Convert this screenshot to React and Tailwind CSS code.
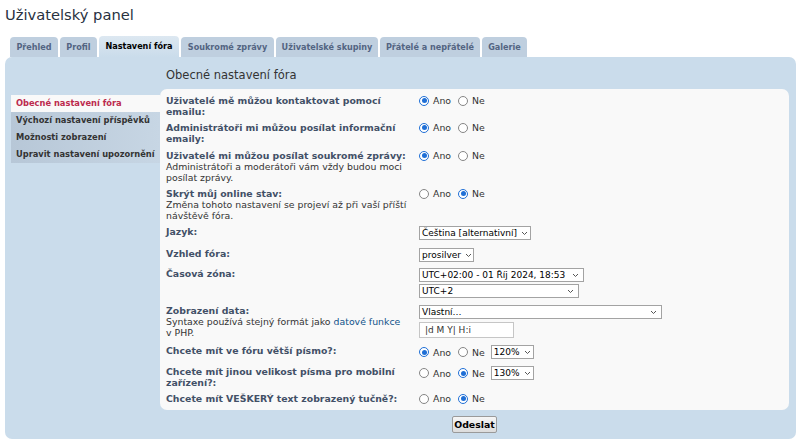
import React from 'react'

const tabs = [
  { label: 'Přehled', w: 'w-[48px]' },
  { label: 'Profil', w: 'w-[37px]' },
  { label: 'Nastavení fóra', w: 'w-[80px]', active: true },
  { label: 'Soukromé zprávy', w: 'w-[93px]' },
  { label: 'Uživatelské skupiny', w: 'w-[102px]' },
  { label: 'Přátelé a nepřátelé', w: 'w-[100px]' },
  { label: 'Galerie', w: 'w-[45px]' },
]

const menu = [
  { label: 'Obecné nastavení fóra', active: true },
  { label: 'Výchozí nastavení příspěvků' },
  { label: 'Možnosti zobrazení' },
  { label: 'Upravit nastavení upozornění' },
]

const Radio = ({ checked }) => (
  <span
    className={`w-[10px] h-[10px] rounded-full border flex items-center justify-center bg-white shrink-0 ${
      checked ? 'border-[#1f6fd6]' : 'border-[#858585]'
    }`}
  >
    {checked && <span className="w-[5px] h-[5px] rounded-full bg-[#1f6fd6]" />}
  </span>
)

const YesNo = ({ yes }) => (
  <div className="flex items-center h-[11px] text-[#333]">
    <Radio checked={yes} />
    <span className="ml-[4px]">Ano</span>
    <span className="ml-[7px]"><Radio checked={!yes} /></span>
    <span className="ml-[4px]">Ne</span>
  </div>
)

const Chevron = () => (
  <svg width="7" height="5" viewBox="0 0 7 5" className="shrink-0 ml-[4px]">
    <path d="M1 1l2.5 2.5L6 1" fill="none" stroke="#555" strokeWidth="1" />
  </svg>
)

// fake native select, fixed width per field
const Select = ({ children, w }) => (
  <div className={`flex items-center justify-between h-[14px] border border-[#a3a3a3] bg-white pl-[2px] pr-[4px] text-black text-[9px] ${w}`}>
    <span className="whitespace-nowrap">{children}</span>
    <Chevron />
  </div>
)

const Row = ({ label, desc, mt, children }) => (
  <div className={`flex items-start ${mt}`}>
    <div className="w-[253px] shrink-0 pr-[4px]">
      <div className="font-bold text-[#425067]">{label}</div>
      {desc && <div className="text-[#333]">{desc}</div>}
    </div>
    <div className="flex-1">{children}</div>
  </div>
)

export default function App() {
  return (
    <div className="w-[800px] h-[441px] bg-white font-['DejaVu_Sans',Verdana,sans-serif] overflow-hidden">
      <h2 className="h-[36px] pl-[5px] pt-[6px] text-[14.7px] leading-[18px] text-[#28313f]">Uživatelský panel</h2>

      <div className="flex items-end gap-[2px] pl-[10px] h-[21px]">
        {tabs.map(t => (
          <div
            key={t.label}
            className={`${t.w} rounded-t-[4px] text-center font-bold text-[8.1px] whitespace-nowrap ${
              t.active
                ? 'h-[21px] leading-[21px] bg-gradient-to-b from-[#dde8f1] to-[#cadceb] text-black'
                : 'h-[20px] leading-[20px] bg-[#bfcfdf] text-[#536482]'
            }`}
          >
            {t.label}
          </div>
        ))}
      </div>

      <div className="ml-[5px] w-[791px] h-[382px] rounded-[7px] bg-[#cadceb] flex pl-[6px] pr-[7px]">
        <div className="w-[149px] mt-[38px] flex flex-col self-start">
          {menu.map(m => (
            <div
              key={m.label}
              className={`h-[17px] leading-[17px] pl-[5px] font-bold text-[8.3px] whitespace-nowrap ${
                m.active
                  ? 'bg-[#f9f9f9] text-[#bc2a4d]'
                  : 'bg-gradient-to-r from-[#b7c7d7] to-[#c7d6e4] text-[#333]'
              }`}
            >
              {m.label}
            </div>
          ))}
        </div>

        <div className="w-[629px] flex flex-col">
          <div className="h-[32px] pt-[12px] pl-[6px] text-[11.5px] leading-[13px] text-[#333]">Obecné nastavení fóra</div>

          <div className="h-[321px] rounded-[7px] bg-[#f9f9f9] pl-[6px] pt-[6px] text-[9.35px] leading-[11px]">
            <Row label={<>Uživatelé mě můžou kontaktovat pomocí<br />emailu:</>}>
              <YesNo yes />
            </Row>
            <Row mt="mt-[5px]" label={<>Administrátoři mi můžou posílat informační<br />emaily:</>}>
              <YesNo yes />
            </Row>
            <Row
              mt="mt-[6px]"
              label="Uživatelé mi můžou posílat soukromé zprávy:"
              desc={<>Administrátoři a moderátoři vám vždy budou moci<br />posílat zprávy.</>}
            >
              <YesNo yes />
            </Row>
            <Row
              mt="mt-[5px]"
              label="Skrýt můj online stav:"
              desc={<>Změna tohoto nastavení se projeví až při vaší příští<br />návštěvě fóra.</>}
            >
              <YesNo />
            </Row>
            <Row mt="mt-[5px]" label="Jazyk:">
              <Select w="w-[112px]">Čeština [alternativní]</Select>
            </Row>
            <Row mt="mt-[8px]" label="Vzhled fóra:">
              <Select w="w-[55px]">prosilver</Select>
            </Row>
            <Row mt="mt-[6px]" label="Časová zóna:">
              <Select w="w-[165px]">UTC+02:00 - 01 Říj 2024, 18:53</Select>
              <div className="mt-[2px]">
                <Select w="w-[160px]">UTC+2</Select>
              </div>
            </Row>
            <Row
              mt="mt-[7px]"
              label="Zobrazení data:"
              desc={<>Syntaxe používá stejný formát jako <span className="text-[#105289]">datové funkce</span><br />v PHP.</>}
            >
              <Select w="w-[243px]">Vlastní…</Select>
              <div className="mt-[3px] w-[95px] h-[16px] border border-[#c6c6c6] bg-white pl-[5px] leading-[14px] text-[9px] text-[#333]">|d M Y| H:i</div>
            </Row>
            <Row mt="mt-[7px]" label="Chcete mít ve fóru větší písmo?:">
              <div className="flex items-center h-[14px]">
                <YesNo yes />
                <div className="ml-[6px]"><Select w="w-[43px]">120%</Select></div>
              </div>
            </Row>
            <Row mt="mt-[7px]" label={<>Chcete mít jinou velikost písma pro mobilní<br />zařízení?:</>}>
              <div className="flex items-center h-[14px]">
                <YesNo />
                <div className="ml-[6px]"><Select w="w-[43px]">130%</Select></div>
              </div>
            </Row>
            <Row mt="mt-[5px]" label="Chcete mít VEŠKERÝ text zobrazený tučně?:">
              <YesNo />
            </Row>
          </div>

          <div className="flex justify-center mt-[6px]">
            <button className="w-[45px] h-[17px] border border-[#9a9a9a] rounded-[2px] bg-gradient-to-b from-[#f6f6f6] to-[#dcdcdc] font-bold text-[9.35px] text-black leading-[15px]">
              Odeslat
            </button>
          </div>
        </div>
      </div>
    </div>
  )
}
